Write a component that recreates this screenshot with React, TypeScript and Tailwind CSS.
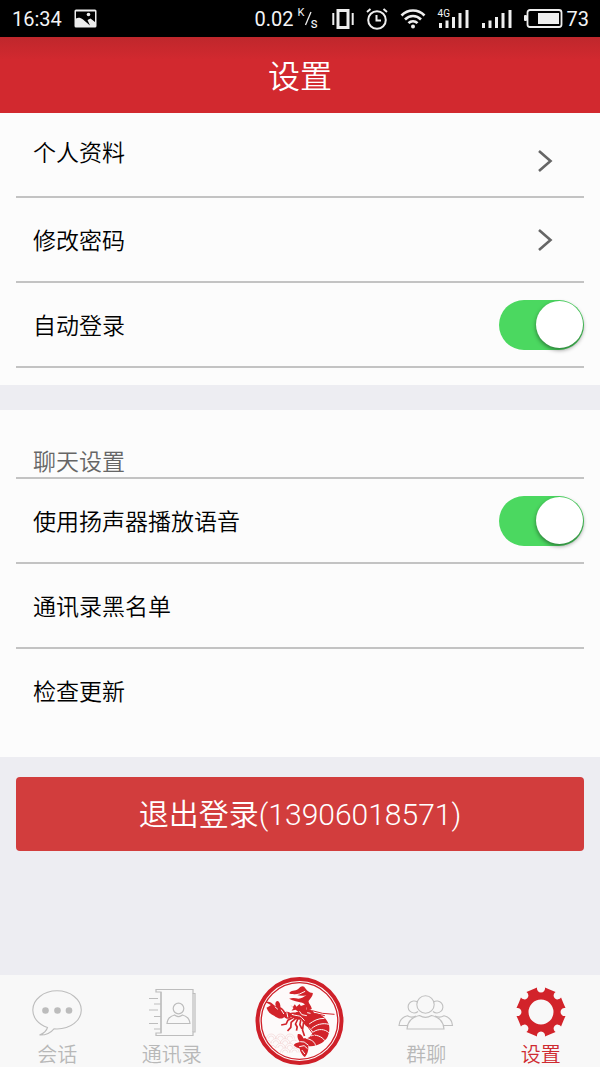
import { useState } from 'react'
import type { ReactNode } from 'react'

type ToggleRowProps = {
  id: string
  label: string
  checked: boolean
  onChange: (checked: boolean) => void
}

type TabProps = {
  label: string
  active?: boolean
  icon: ReactNode
}

const point = (radius: number, degrees: number) => {
  const rad = (degrees * Math.PI) / 180
  return `${(25 + radius * Math.cos(rad)).toFixed(2)} ${(25 + radius * Math.sin(rad)).toFixed(2)}`
}

// eight teeth with round notches between them
const gearPath =
  `M${point(24.8, 9)}` +
  Array.from({ length: 8 }, (_, i) => {
    const start = i * 45 + 9
    return `L${point(24, start + 13.5)}L${point(24.8, start + 27)}A4 4 0 1 0 ${point(24.8, start + 45)}`
  }).join('') +
  'ZM25 12.5a12.5 12.5 0 1 0 0 25a12.5 12.5 0 1 0 0 -25Z'

const GearIcon = () => (
  <svg viewBox="0 0 50 50" className="size-[50px] shrink-0" fill="#d2232a" fillRule="evenodd">
    <path d={gearPath} />
  </svg>
)

const ChatIcon = () => (
  <svg viewBox="0 0 50 50" className="size-[50px] shrink-0" fill="none" stroke="#bdbdbd" strokeWidth="1.1">
    <path d="M15.5 40.5C6 37.5 .8 30.5 .8 23C.8 12.5 11.5 3.8 25 3.8S49.3 12.5 49.3 23S38.5 42 25 42L22 41.8C18.5 46 13.5 48.3 7.5 48C11.5 46.5 14.5 44 15.5 40.5Z" />
    <g fill="#bcbcbc" stroke="none">
      <circle cx="13.5" cy="23.5" r="3.3" />
      <circle cx="25.5" cy="23.5" r="3.3" />
      <circle cx="37" cy="23.5" r="3.3" />
    </g>
  </svg>
)

const ContactsIcon = () => (
  <svg viewBox="0 0 50 50" className="size-[50px] shrink-0" fill="none" stroke="#bdbdbd" strokeWidth="1.2">
    <path d="M9 2.5H46V6.5H48V45H46V48.5H9V46H14V5H9Z" />
    <path d="M14 5V46M46 6.5V45M2 11.5H11M7 17H14M2 23H11M7 29.5H14M2 36.5H11M7 42H14" />
    <circle cx="31.5" cy="21.5" r="5.3" />
    <path d="M20 36.5C20.5 31.5 23.5 29 27.5 28C30 30 33 30 35.5 28C39.5 29 42.5 31.5 43 36.5Z" />
  </svg>
)

const GroupIcon = () => (
  <svg viewBox="0 0 56 50" className="h-[50px] w-[56px] shrink-0" fill="none" stroke="#c0c0c0" strokeWidth="1.1">
    <circle cx="27.5" cy="17.5" r="8.7" />
    <path d="M20 24.5A6 6 0 1 1 19.5 15M35 24.5A6 6 0 1 0 35.5 15" />
    <path d="M9 42C9.5 34 14 30 21.5 28.5C25.5 31 29.5 31 33.5 28.5C41 30 45.5 34 46 42Z" />
    <path d="M10 38.5H1C1.5 33 4.5 30 9.5 28.8C12 30.5 15 30.5 18 29M45 38.5H54.5C54 33 51 30 46 28.8C43 30.5 40 30.5 37 29" />
  </svg>
)

const LobsterLogo = () => (
  <svg viewBox="30 20 266 270" className="h-[90px] w-[89px]" fill="#d2232a">
    <circle cx="163" cy="155" r="126" fill="#fdfafa" stroke="#cf2029" strokeWidth="12" />
    <circle cx="163" cy="155" r="115" fill="none" stroke="#cf2029" strokeWidth="4" />
    <g fill="none" stroke="#f0cccc" strokeWidth="1.6">
      <path d="M64 208a14 14 0 0 1 28 0a14 14 0 0 1 28 0a14 14 0 0 1 28 0M70 208a8 8 0 0 1 16 0M98 208a8 8 0 0 1 16 0M126 208a8 8 0 0 1 16 0" />
      <path d="M64 212a14 14 0 0 1 14 10a14 14 0 0 1 28 0a14 14 0 0 1 28 0a14 14 0 0 1 20 -8M84 222a8 8 0 0 1 16 0M112 222a8 8 0 0 1 16 0" />
      <path d="M78 228a14 14 0 0 1 14 8a14 14 0 0 1 28 0a14 14 0 0 1 28 0M98 236a8 8 0 0 1 16 0M126 236a8 8 0 0 1 16 0" />
      <path d="M106 250a14 14 0 0 1 28 0a14 14 0 0 1 28 0M112 250a8 8 0 0 1 16 0M140 250a8 8 0 0 1 16 0" />
    </g>
    <path d="M132 72C137 62 150 66 159 59C165 52 171 48 177 52C184 62 191 70 203 71C203 82 194 88 190 96C190 103 199 110 200 119L185 123C184 112 180 103 171 100C158 96 145 95 132 88C140 85 151 86 160 88C169 87 177 83 184 77C174 81 163 80 153 76C145 74 139 76 132 72Z" />
    <path d="M61 99C69 94 80 99 87 108L92 111C89 103 91 96 97 95C104 97 106 107 106 114C112 116 117 123 120 128C128 125 136 129 139 135L136 146C129 151 121 148 117 143C111 151 97 148 88 140C76 135 67 126 64 115C69 113 73 110 77 107C71 104 66 102 61 99Z" />
    <path d="M133 132C141 127 149 132 154 128C163 129 169 120 177 123L190 119C199 120 207 127 208 135L198 167L187 173C180 169 172 158 169 151C157 153 143 148 136 141Z" />
    <path d="M135 106L143 113L149 105L154 112L163 104L167 110L182 105L184 126L166 132L151 121L139 124L145 116Z" />
    <path d="M207 132C228 134 241 145 248 159C256 172 253 194 245 207C234 222 211 234 188 230C181 223 173 216 165 216C165 206 174 208 187 206C195 204 199 197 204 188C199 181 193 176 188 171C194 162 201 151 207 132Z" />
    <path d="M158 194C166 192 173 199 175 208C185 213 193 221 189 230C191 241 187 256 179 263C173 259 164 247 164 238C158 236 151 234 146 228C150 219 158 221 164 218C158 210 155 202 158 194Z" />
    <g fill="none" stroke="#fdfafa" strokeWidth="3">
      <path d="M192 164C206 154 218 147 238 147M199 178C213 165 233 160 251 165M204 188C220 177 239 179 251 190M197 200C210 193 231 202 239 214M183 207C200 211 210 219 211 229" />
      <path d="M140 135C150 140 163 137 169 144L178 154M163 126L170 136L185 139M186 130L196 132M162 232L177 229L187 238M165 217L177 218L190 228M170 242L179 254" />
      <path d="M89 112L98 120M108 121L116 134M125 129L128 144M149 77L163 74L180 66" />
    </g>
    <g fill="none" stroke="#d2232a" strokeLinejoin="round">
      <path d="M143 145L128 153L123 164L108 167M151 148L138 159L137 174L127 185M158 149L151 164L156 173L154 184M167 152L164 166L170 178M175 160L172 182L178 200" strokeWidth="5" />
      <path d="M171 149L211 204M201 124L232 132L268 135M207 132L239 139" strokeWidth="3" />
    </g>
  </svg>
)

const StatusBar = () => (
  <div className="flex h-[37px] items-center justify-between bg-black pr-[11px] pl-3 text-xl font-normal text-gray-100">
    <div className="flex items-center gap-3">
      <span>16:34</span>
      <svg viewBox="0 0 23 19" className="h-[19px] w-[23px]">
        <rect x="0.5" y="0.5" width="22" height="18" rx="1.5" fill="#eee" />
        <path d="M2 2.5H21V13L16.5 9.5L13.5 11L16 16.5L9 10.5C6.5 8.5 4 8.5 2 9.5Z" fill="#000" />
        <circle cx="14.5" cy="5.5" r="1.8" fill="#eee" />
      </svg>
    </div>
    <div className="flex items-center">
      <span>0.02</span>
      <span className="relative ml-1 h-6 w-[22px] text-[11px] leading-3">
        <span className="absolute top-0 left-0">K</span>
        <svg viewBox="0 0 22 24" className="absolute inset-0" stroke="#eee" strokeWidth="1.3">
          <path d="M7.5 18L13 5" />
        </svg>
        <span className="absolute top-2 left-[13px] text-sm leading-4">s</span>
      </span>
      <svg viewBox="0 0 22 20" className="ml-3 h-5 w-[22px]" fill="none" stroke="#eee">
        <rect x="6" y="1.5" width="10" height="17" strokeWidth="3" />
        <path d="M1.3 4V16M20.7 4V16" strokeWidth="2" />
      </svg>
      <svg viewBox="0 0 22 22" className="ml-3 size-[22px]" fill="none" stroke="#eee" strokeWidth="2">
        <circle cx="11" cy="12" r="8.8" />
        <path d="M10.5 7V12.5H15M1 4L4.5 1M21 4L17.5 1" />
      </svg>
      <svg viewBox="0 0 26 21" className="ml-3 h-[21px] w-[26px]" fill="none" stroke="#eee" strokeWidth="2.6">
        <path d="M1.5 7.5C8 .8 18 .8 24.5 7.5M5 11.5C9.5 6.8 16.5 6.8 21 11.5M8.5 15.2C11 12.5 15 12.5 17.5 15.2" />
        <circle cx="13" cy="18.5" r="2" fill="#eee" stroke="none" />
      </svg>
      <span className="relative ml-3 h-5 w-[31px]">
        <span className="absolute -top-px left-0 text-[10px] leading-3">4G</span>
        <svg viewBox="0 0 31 20" className="size-full" stroke="#eee" strokeWidth="3">
          <path d="M2.5 19V14M9 19V11.5M15.5 19V8M22 19V4M29 19V1" />
        </svg>
      </span>
      <svg viewBox="0 0 31 20" className="ml-3 h-5 w-[31px]" stroke="#eee" strokeWidth="3">
        <path d="M2.5 19V14M9 19V11.5M15.5 19V8M22 19V4M29 19V1" />
      </svg>
      <svg viewBox="0 0 39 19" className="ml-3 h-[19px] w-[39px]">
        <rect x="3.5" y="1" width="34" height="17" rx="2.5" fill="none" stroke="#eee" strokeWidth="1.8" />
        <rect x="14" y="4" width="21" height="11" fill="#eee" />
        <rect x="0" y="6" width="3" height="6" rx="1" fill="#eee" />
      </svg>
      <span className="ml-1">73</span>
    </div>
  </div>
)

const Chevron = () => (
  <svg viewBox="0 0 16 24" className="h-6 w-4" fill="none" stroke="#666" strokeWidth="2.6">
    <path d="M2 2L13.5 12L2 22" />
  </svg>
)

const rowStyles =
  'flex h-[85px] w-full items-center justify-between border-b-2 border-[#c3c3c3] pl-[17px] text-left'

const ToggleRow = ({ id, label, checked, onChange }: ToggleRowProps) => (
  <div className={rowStyles}>
    <label htmlFor={id} className="pt-1.5">
      {label}
    </label>
    <input
      id={id}
      type="checkbox"
      role="switch"
      checked={checked}
      onChange={(e) => onChange(e.target.checked)}
      className="flex h-[50px] w-[85px] cursor-pointer appearance-none items-center rounded-full bg-gray-300 px-px transition-colors before:size-[47px] before:rounded-full before:bg-white before:shadow-[0_2px_4px_rgba(0,0,0,0.45)] checked:justify-end checked:bg-[#4bd860]"
    />
  </div>
)

const Tab = ({ label, active, icon }: TabProps) => (
  <a
    href="#"
    aria-current={active ? 'page' : undefined}
    className={`flex flex-1 flex-col items-center pt-3 text-xl leading-6 ${
      active ? 'text-[#cf2a30]' : 'text-[#b8b8b8]'
    }`}
  >
    {icon}
    <span className="mt-1.5">{label}</span>
  </a>
)

const App = () => {
  const [autoLogin, setAutoLogin] = useState(true)
  const [speaker, setSpeaker] = useState(true)

  return (
    <div className="flex min-h-screen flex-col bg-[#ededf2] font-[Roboto,'Noto_Sans_CJK_SC',sans-serif] font-[350] text-black">
      <StatusBar />
      <header className="flex h-[76px] items-center justify-center bg-linear-to-b from-[#bf272c] to-[#d2292f] to-30% pt-1 text-white">
        <h1 className="text-[32px] font-[350]">设置</h1>
      </header>

      <main className="flex-1 text-[23px]">
        <section className="bg-[#fcfcfc] px-4 pb-[17px]">
          <button type="button" className={rowStyles}>
            <span>个人资料</span>
            <span className="pt-3 pr-[31px]">
              <Chevron />
            </span>
          </button>
          <button type="button" className={rowStyles}>
            <span className="pt-1.5">修改密码</span>
            <span className="pr-[31px]">
              <Chevron />
            </span>
          </button>
          <ToggleRow id="auto-login" label="自动登录" checked={autoLogin} onChange={setAutoLogin} />
        </section>

        <section className="mt-[25px] bg-[#fcfcfc] px-4 pb-6">
          <h2 className="flex h-[69px] items-end border-b-2 border-[#c3c3c3] pl-[17px] leading-7 font-[350] text-[#666]">
            聊天设置
          </h2>
          <ToggleRow id="speaker" label="使用扬声器播放语音" checked={speaker} onChange={setSpeaker} />
          <button type="button" className={rowStyles}>
            <span className="pt-1.5">通讯录黑名单</span>
          </button>
          <button type="button" className="flex h-[84px] w-full items-center pl-[17px] text-left">
            <span className="pt-1">检查更新</span>
          </button>
        </section>

        <div className="px-4 py-5">
          <button type="button" className="h-[74px] w-full rounded bg-[#d23d3d] text-[30px] text-white">
            退出登录(13906018571)
          </button>
        </div>
      </main>

      <nav className="flex h-[92px] bg-[#f8f8f8] pr-0.5">
        <Tab label="会话" icon={<ChatIcon />} />
        <Tab label="通讯录" icon={<ContactsIcon />} />
        <a href="#" aria-label="首页" className="flex w-[140px] justify-center pt-px">
          <LobsterLogo />
        </a>
        <Tab label="群聊" icon={<GroupIcon />} />
        <Tab label="设置" icon={<GearIcon />} active />
      </nav>
    </div>
  )
}

export default App
